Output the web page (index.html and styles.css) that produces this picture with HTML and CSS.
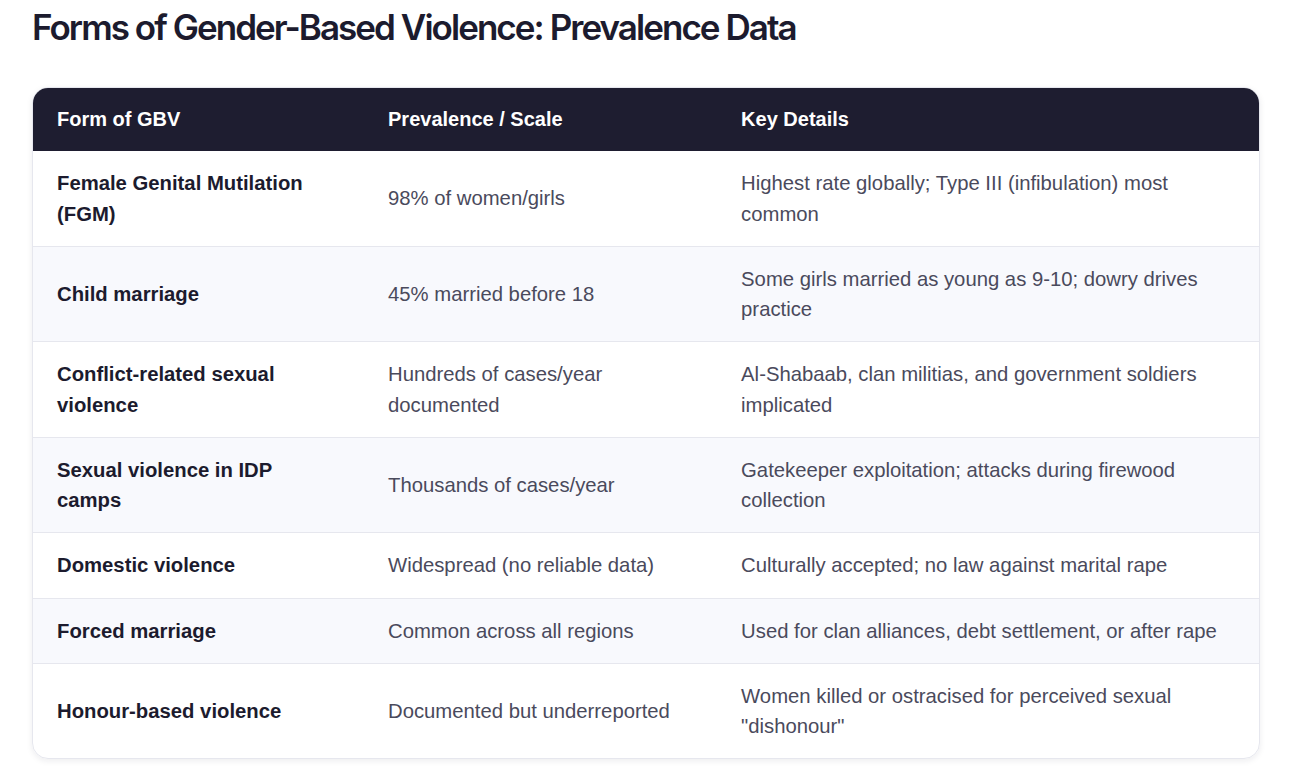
FILE: index.html
```html
<!DOCTYPE html>
<html lang="en">
<head>
<meta charset="utf-8">
<title>Forms of Gender-Based Violence: Prevalence Data</title>
<link rel="stylesheet" href="styles.css">
</head>
<body>
<main class="page">
  <h1 class="title">Forms of Gender-Based Violence: Prevalence Data</h1>
  <div class="card">
    <table class="data">
      <colgroup>
        <col class="c1"><col class="c2"><col class="c3">
      </colgroup>
      <thead>
        <tr><th>Form of GBV</th><th>Prevalence / Scale</th><th>Key Details</th></tr>
      </thead>
      <tbody>
        <tr><td class="form">Female Genital Mutilation (FGM)</td><td>98% of women/girls</td><td>Highest rate globally; Type III (infibulation) most common</td></tr>
        <tr><td class="form">Child marriage</td><td>45% married before 18</td><td>Some girls married as young as 9-10; dowry drives practice</td></tr>
        <tr><td class="form">Conflict-related sexual violence</td><td>Hundreds of cases/year documented</td><td>Al-Shabaab, clan militias, and government soldiers implicated</td></tr>
        <tr><td class="form">Sexual violence in IDP camps</td><td>Thousands of cases/year</td><td>Gatekeeper exploitation; attacks during firewood collection</td></tr>
        <tr><td class="form">Domestic violence</td><td>Widespread (no reliable data)</td><td>Culturally accepted; no law against marital rape</td></tr>
        <tr><td class="form">Forced marriage</td><td>Common across all regions</td><td>Used for clan alliances, debt settlement, or after rape</td></tr>
        <tr><td class="form">Honour-based violence</td><td>Documented but underreported</td><td>Women killed or ostracised for perceived sexual "dishonour"</td></tr>
      </tbody>
    </table>
  </div>
</main>
</body>
</html>
```
FILE: styles.css
```css
* { box-sizing: border-box; }
html, body { margin: 0; padding: 0; background: #ffffff; }
body { font-family: "Liberation Sans", Arial, sans-serif; color: #1c1b2e; }
.page { padding: 5px 33px 24px 32px; }
.title {
  font-family: Inter, "Liberation Sans", sans-serif;
  font-weight: 600;
  font-size: 35px;
  letter-spacing: -1.95px;
  line-height: 44px;
  margin: 0 0 38px 0;
  color: #1c1b2e;
}
.card {
  border-radius: 16px;
  overflow: hidden;
  border: 1px solid #e6e7ee;
  box-shadow: 0 2px 6px rgba(20, 20, 50, 0.08);
}
.data {
  width: 100%;
  border-collapse: collapse;
  table-layout: fixed;
  font-size: 20.3px;
  line-height: 30.25px;
}
.c1 { width: 27%; }
.c2 { width: 28.8%; }
.c3 { width: 44.2%; }
.data th {
  background: #1e1d30;
  color: #ffffff;
  font-size: 20px;
  font-weight: 700;
  text-align: left;
  padding: 16px 24px 17px 24px;
}
.data td {
  padding: 17px 24px 17px 24px;
  border-top: 1px solid #e6e7ee;
  color: #4a4a5c;
  vertical-align: middle;
}
.data tbody tr:first-child td { border-top: none; }
.data tbody tr:nth-child(even) td { background: #f8f9fd; }
.data td.form { font-weight: 700; color: #1c1b2e; }
```
